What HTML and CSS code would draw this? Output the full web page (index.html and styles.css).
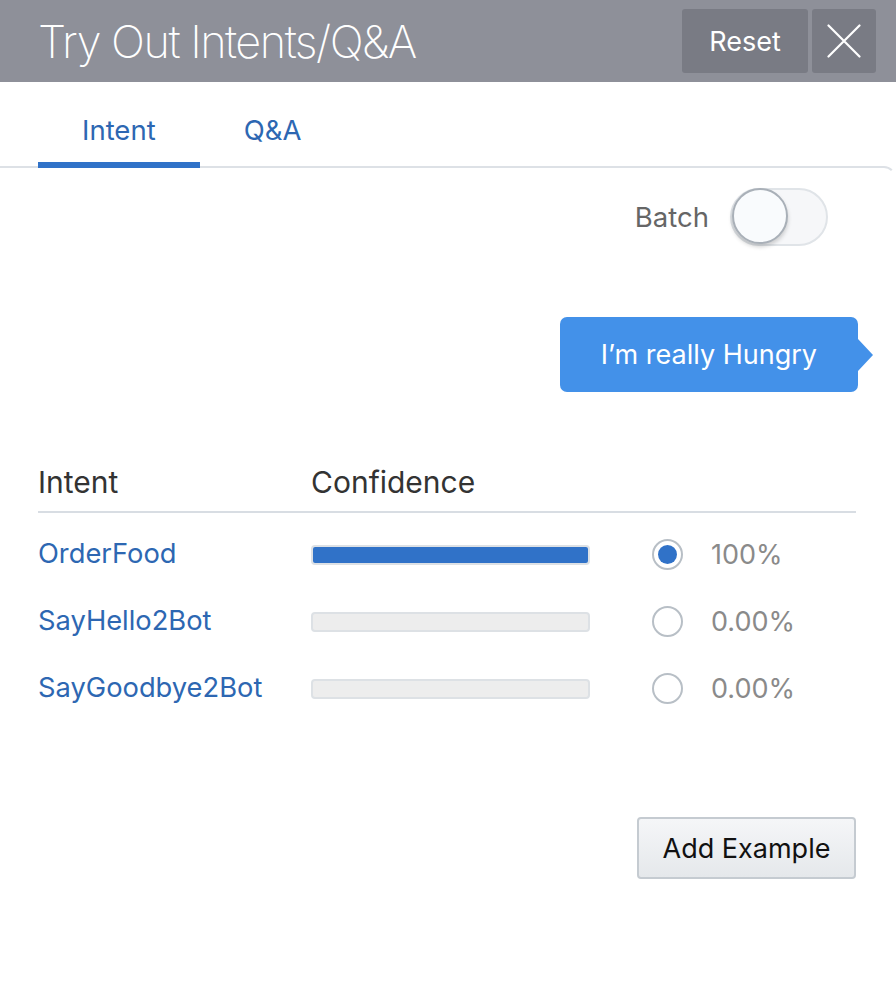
FILE: index.html
```html
<!DOCTYPE html>
<html lang="en">
<head>
<meta charset="utf-8">
<title>Try Out Intents/Q&amp;A</title>
<link rel="stylesheet" href="styles.css">
</head>
<body>
<div class="dialog">
  <header class="titlebar">
    <h1 class="title">Try Out Intents/Q&amp;A</h1>
    <div class="actions">
      <button class="hbtn reset" type="button">Reset</button>
      <button class="hbtn close" type="button" aria-label="Close">
        <svg width="34" height="34" viewBox="0 0 34 34" aria-hidden="true">
          <path d="M1.5 1.5 L32.5 32.5 M32.5 1.5 L1.5 32.5" stroke="#ffffff" stroke-width="2.2" stroke-linecap="round" fill="none"/>
        </svg>
      </button>
    </div>
  </header>

  <nav class="tabs">
    <div class="tab active">Intent</div>
    <div class="tab">Q&amp;A</div>
  </nav>

  <main class="panel">
    <div class="batch-row">
      <span class="batch-label">Batch</span>
      <span class="switch" role="switch" aria-checked="false"><span class="knob"></span></span>
    </div>

    <div class="bubble-row">
      <div class="bubble">I’m really Hungry</div>
    </div>

    <div class="results">
      <div class="results-head">
        <div class="col-intent">Intent</div>
        <div class="col-conf">Confidence</div>
      </div>
      <div class="result-row">
        <div class="intent-name">OrderFood</div>
        <div class="bar"><div class="bar-fill" style="width:100%"></div></div>
        <div class="score"><span class="radio checked"></span><span class="pct">100%</span></div>
      </div>
      <div class="result-row">
        <div class="intent-name">SayHello2Bot</div>
        <div class="bar"><div class="bar-fill" style="width:0%"></div></div>
        <div class="score"><span class="radio"></span><span class="pct">0.00%</span></div>
      </div>
      <div class="result-row">
        <div class="intent-name">SayGoodbye2Bot</div>
        <div class="bar"><div class="bar-fill" style="width:0%"></div></div>
        <div class="score"><span class="radio"></span><span class="pct">0.00%</span></div>
      </div>
    </div>

    <div class="footer-row">
      <button class="add-btn" type="button">Add Example</button>
    </div>
  </main>
</div>
</body>
</html>
```

FILE: styles.css
```css
* { box-sizing: border-box; }

html, body {
  margin: 0;
  padding: 0;
  background: #ffffff;
}

body {
  font-family: "Inter", "Liberation Sans", Arial, sans-serif;
  width: 896px;
  height: 1002px;
  overflow: hidden;
}

.dialog {
  width: 896px;
}

/* ---------- title bar ---------- */
.titlebar {
  height: 82px;
  background: #8e9099;
  display: flex;
  align-items: center;
  justify-content: space-between;
  padding: 0 20px 0 38px;
}

.title {
  margin: 0;
  font-weight: 200;
  font-size: 45px;
  color: #ffffff;
  letter-spacing: -1.5px;
  line-height: 1;
}

.actions {
  display: flex;
  gap: 4px;
}

.hbtn {
  height: 64px;
  border: none;
  border-radius: 3px;
  background: #797b84;
  color: #ffffff;
  font-family: inherit;
  font-size: 27px;
  padding: 0;
  display: flex;
  align-items: center;
  justify-content: center;
}

.reset { width: 126px; }
.close { width: 64px; }

/* ---------- tabs ---------- */
.tabs {
  display: flex;
  padding-left: 38px;
  height: 84px;
}

.tab {
  position: relative;
  padding: 32px 44px 20px;
  line-height: 32px;
  font-size: 27.5px;
  color: #2d67b2;
}

.tab.active::after {
  content: "";
  position: absolute;
  left: 0;
  right: 0;
  bottom: -2px;
  height: 6px;
  background: #3072c8;
}

/* ---------- panel ---------- */
.panel {
  border-top: 2px solid #dde1e6;
  border-right: 2px solid transparent;
  border-top-right-radius: 12px;
  padding: 0 38px 0 38px;
}

.batch-row {
  display: flex;
  justify-content: flex-end;
  align-items: center;
  gap: 21px;
  margin-top: 20px;
  padding-right: 28px;
}

.batch-label {
  font-size: 27.5px;
  color: #666666;
}

.switch {
  position: relative;
  width: 98px;
  height: 58px;
  border: 2px solid #e0e4e8;
  border-radius: 30px;
  background: #f6f7f9;
}

.knob {
  position: absolute;
  left: 0;
  top: -2px;
  width: 56px;
  height: 56px;
  border-radius: 50%;
  border: 2px solid #a9b0b8;
  background: #f9fbfd;
  box-shadow: 0 3px 4px rgba(0, 0, 0, 0.18);
}

.bubble-row {
  display: flex;
  justify-content: flex-end;
  margin-top: 71px;
}

.bubble {
  position: relative;
  margin-right: -2px;
  height: 75px;
  line-height: 75px;
  padding: 0 41px;
  background: #4391e9;
  color: #ffffff;
  font-size: 27px;
  border-radius: 7px;
}

.bubble::after {
  content: "";
  position: absolute;
  right: -15px;
  top: 22px;
  border-left: 15px solid #4391e9;
  border-top: 16px solid transparent;
  border-bottom: 16px solid transparent;
}

/* ---------- results ---------- */
.results {
  margin-top: 67px;
}

.results-head {
  display: grid;
  grid-template-columns: 273px 1fr;
  height: 54px;
  line-height: 46px;
  border-bottom: 2px solid #d8dde3;
  font-size: 30px;
  color: #333333;
}

.result-row {
  display: grid;
  grid-template-columns: 273px 279px 1fr;
  align-items: center;
  height: 67px;
}

.results-head + .result-row {
  margin-top: 8px;
}

.intent-name {
  font-size: 27.3px;
  color: #2d67b2;
  margin-top: -3px;
}

.bar {
  height: 20px;
  border: 2px solid #dde1e5;
  border-radius: 4px;
  background: #ededed;
  overflow: hidden;
}

.bar-fill {
  height: 100%;
  background: #3072c8;
}

.score {
  display: flex;
  align-items: center;
  padding-left: 62px;
  gap: 28px;
}

.radio {
  position: relative;
  width: 31px;
  height: 31px;
  border: 2px solid #b8bfc6;
  border-radius: 50%;
  background: #ffffff;
  flex: none;
}

.radio.checked::after {
  content: "";
  position: absolute;
  left: 4px;
  top: 4px;
  width: 19px;
  height: 19px;
  border-radius: 50%;
  background: #3072c8;
}

.pct {
  font-size: 27px;
  color: #8a8a8a;
}

.footer-row {
  display: flex;
  justify-content: flex-end;
  margin-top: 95px;
}

.add-btn {
  width: 219px;
  height: 62px;
  border: 2px solid #c5cbd1;
  border-radius: 4px;
  background: linear-gradient(#f5f6f8, #e5e8eb);
  font-family: inherit;
  font-size: 27px;
  color: #111111;
  padding: 0;
}
```
